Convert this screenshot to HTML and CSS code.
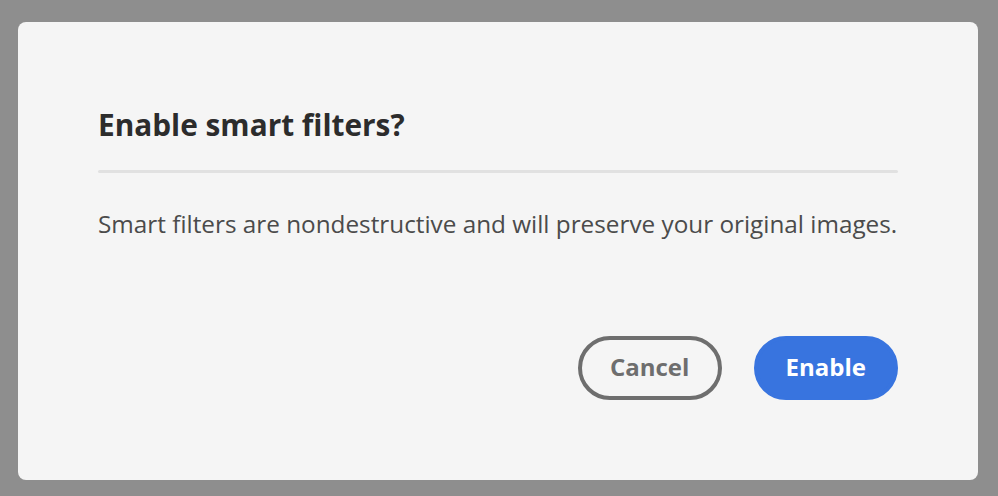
FILE: index.html
```html
<!DOCTYPE html>
<html>
<head>
<meta charset="utf-8">
<link rel="stylesheet" href="styles.css">
</head>
<body>
<div class="dialog">
  <h2 class="title">Enable smart filters?</h2>
  <div class="divider"></div>
  <p class="content">Smart filters are nondestructive and will preserve your original images.</p>
  <div class="actions">
    <button class="btn btn-secondary">Cancel</button>
    <button class="btn btn-primary">Enable</button>
  </div>
</div>
</body>
</html>
```
FILE: styles.css
```css
html, body {
  margin: 0;
  height: 100%;
}
body {
  background: #8e8e8e;
  padding: 22px 20px 16px 18px;
  box-sizing: border-box;
  font-family: "Open Sans", "Noto Sans", sans-serif;
}
.dialog {
  width: 960px;
  height: 458px;
  box-sizing: border-box;
  background: #f5f5f5;
  border-radius: 8px;
  padding: 80px 80px 0 80px;
  display: flex;
  flex-direction: column;
}
.title {
  margin: 0;
  font-size: 29.8px;
  font-weight: 700;
  color: #2c2c2c;
  line-height: 36px;
  padding-top: 5px;
  white-space: nowrap;
}
.divider {
  height: 3px;
  background: #e1e1e1;
  margin-top: 27px;
  border-radius: 2px;
}
.content {
  margin: 33px 0 0 0;
  font-size: 24.3px;
  line-height: 36px;
  color: #4b4b4b;
  white-space: nowrap;
}
.actions {
  display: flex;
  justify-content: flex-end;
  gap: 32px;
  margin-top: 94px;
}
.btn {
  height: 64px;
  min-width: 144px;
  border-radius: 32px;
  font-family: inherit;
  font-size: 24px;
  font-weight: 700;
  padding: 0 28px 3px;
  box-sizing: border-box;
  cursor: pointer;
}
.btn-secondary {
  background: transparent;
  border: 4px solid #6e6e6e;
  color: #6e6e6e;
}
.btn-primary {
  background: #3874df;
  border: 4px solid #3874df;
  color: #fff;
}
```
